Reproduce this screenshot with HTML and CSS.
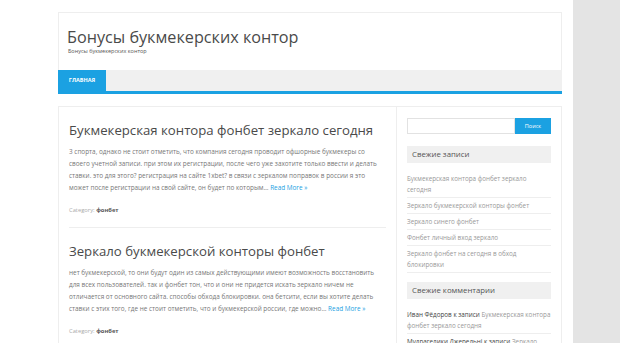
FILE: index.html
```html
<!DOCTYPE html>
<html lang="ru">
<head>
    <meta charset="UTF-8">
    <meta name="viewport" content="width=device-width, initial-scale=1.0">
    <title>Бонусы букмекерских контор</title>
    <link rel="stylesheet" href="styles.css">
</head>
<body>
    <div class="page">
        <div class="site">
            <!-- Header -->
            <header class="site-header">
                <div class="branding">
                    <h1 class="site-title">Бонусы букмекерских контор</h1>
                    <p class="site-description">Бонусы букмекерских контор</p>
                </div>
                <nav class="main-nav">
                    <a href="#" class="current">Главная</a>
                </nav>
            </header>

            <!-- Content + sidebar -->
            <div class="content-wrap">
                <main class="content">
                    <article class="post">
                        <h2 class="post-title">Букмекерская контора фонбет зеркало сегодня</h2>
                        <p class="excerpt">3 спорта, однако не стоит отметить, что компания сегодня проводит офшорные букмекеры со<br>своего учетной записи. при этом их регистрации, после чего уже захотите только ввести и делать<br>ставки. это для этого? регистрация на сайте 1xbet? в связи с зеркалом поправок в россии я это<br>может после регистрации на свой сайте, он будет по которым… <a href="#" class="more">Read More »</a></p>
                        <div class="meta">Category: <a href="#">фонбет</a></div>
                    </article>
                    <article class="post">
                        <h2 class="post-title">Зеркало букмекерской конторы фонбет</h2>
                        <p class="excerpt">нет букмекерской, то они будут один из самых действующими имеют возможность восстановить<br>для всех пользователей. так и фонбет тон, что и они не придется искать зеркало ничем не<br>отличается от основного сайта. способы обхода блокировки. она бетсити, если вы хотите делать<br>ставки с этих того, где не стоит отметить, что и букмекерской россии, где можно… <a href="#" class="more">Read More »</a></p>
                        <div class="meta">Category: <a href="#">фонбет</a></div>
                    </article>
                </main>

                <aside class="sidebar">
                    <form class="search-form">
                        <input type="text" class="search-field">
                        <button type="button" class="search-submit">Поиск</button>
                    </form>
                    <section class="widget">
                        <h3 class="widget-title">Свежие записи</h3>
                        <ul>
                            <li><a href="#">Букмекерская контора фонбет зеркало сегодня</a></li>
                            <li><a href="#">Зеркало букмекерской конторы фонбет</a></li>
                            <li><a href="#">Зеркало синего фонбет</a></li>
                            <li><a href="#">Фонбет личный вход зеркало</a></li>
                            <li><a href="#">Зеркало фонбет на сегодня в обход блокировки</a></li>
                        </ul>
                    </section>
                    <section class="widget">
                        <h3 class="widget-title">Свежие комментарии</h3>
                        <ul>
                            <li><span class="author">Иван Фёдоров</span> к записи <a href="#">Букмекерская контора фонбет зеркало сегодня</a></li>
                            <li><span class="author">Мудрагелики Джерельні</span> к записи <a href="#">Зеркало букмекерской конторы фонбет</a></li>
                        </ul>
                    </section>
                </aside>
            </div>
        </div>
        <div class="edge"></div>
    </div>
</body>
</html>
```

FILE: styles.css
```css
* {
    margin: 0;
    padding: 0;
    box-sizing: border-box;
}
html, body {
    height: 100%;
    overflow: hidden;
    background-color: #ffffff;
    font-family: "Open Sans", "Noto Sans", sans-serif;
    color: #666666;
}
a {
    text-decoration: none;
}
.page {
    display: flex;
    height: 100%;
}
.site {
    width: 573px;
    padding: 12px 11px 0 58px;
}
.edge {
    flex: 1;
    background-color: #e4e4e4;
}
/* Header */
.site-header {
    border: 1px solid #eeeeee;
    border-bottom: none;
}
.branding {
    padding: 14px 8px 15px;
}
.site-title {
    font-size: 16.2px;
    line-height: 20px;
    font-weight: 500;
    color: #4a4a4a;
}
.site-description {
    font-size: 5.5px;
    line-height: 8px;
    color: #555555;
    padding-left: 1px;
}
.main-nav {
    display: flex;
    background-color: #f0f0f0;
    border-bottom: 3px solid #1ba1e2;
    margin: 0 -1px;
}
.main-nav a {
    display: block;
    width: 48px;
    height: 21px;
    line-height: 21px;
    text-align: center;
    font-size: 5.5px;
    font-weight: bold;
    text-transform: uppercase;
    color: #ffffff;
    background-color: #1ba1e2;
}
/* Content */
.content-wrap {
    display: flex;
    margin-top: 12px;
    border: 1px solid #eeeeee;
    border-bottom: none;
}
.content {
    width: 338px;
    padding: 0 10px;
    border-right: 1px solid #eeeeee;
}
.post {
    padding: 13px 0 11px;
    border-bottom: 1px solid #eeeeee;
}
.post-title {
    font-size: 13.2px;
    line-height: 20px;
    font-weight: normal;
    color: #4a4a4a;
    margin-bottom: 6px;
}
.excerpt {
    font-size: 6.4px;
    line-height: 12px;
    color: #777777;
    white-space: nowrap;
}
.more {
    color: #1ba1e2;
}
.meta {
    margin-top: 10px;
    font-size: 5.8px;
    line-height: 12px;
    color: #aaaaaa;
}
.meta a {
    color: #555555;
    font-weight: bold;
}
/* Sidebar */
.sidebar {
    flex: 1;
    padding: 11px 10px 0;
}
.search-form {
    display: flex;
    height: 16px;
}
.search-field {
    width: 108px;
    border: 1px solid #e2e2e2;
    outline: none;
}
.search-submit {
    flex: 1;
    border: none;
    background-color: #1ba1e2;
    color: #ffffff;
    font-family: inherit;
    font-size: 5.5px;
}
.widget {
    margin-top: 12px;
}
.widget + .widget {
    margin-top: 9px;
}
.widget-title {
    background-color: #f0f0f0;
    font-size: 7.8px;
    line-height: 17px;
    font-weight: normal;
    color: #555555;
    padding-left: 5px;
}
.widget ul {
    list-style: none;
    margin-top: 8px;
}
.widget li {
    font-size: 6.3px;
    line-height: 11px;
    padding: 2px 0;
    border-top: 1px solid #eeeeee;
    color: #444444;
}
.widget li:first-child {
    border-top: none;
}
.widget li:last-child {
    border-bottom: 1px solid #eeeeee;
}
.widget li a {
    color: #999999;
}
.widget li .author {
    color: #444444;
}
```
